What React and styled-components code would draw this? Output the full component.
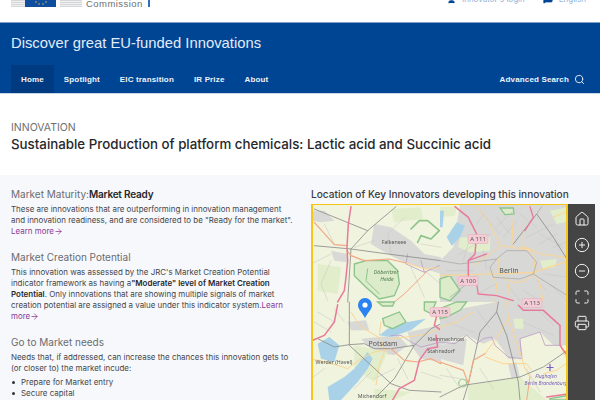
import React from 'react'
import styled, { createGlobalStyle } from 'styled-components'
import { Home, CirclePlus, CircleMinus, Maximize, Printer, Search, ArrowRight, User, MessageSquare } from 'lucide-react'

const Global = createGlobalStyle`
  html, body {
    margin: 0;
    height: 400px;
    overflow: hidden;
    background: #fff;
  }
  * { box-sizing: border-box; }
`

const Page = styled.div`
  width: 600px;
  height: 400px;
  overflow: hidden;
  font-family: Inter, "Noto Sans", sans-serif;
`

const TopBar = styled.div`
  height: 22px;
  overflow: hidden;
  display: flex;
  align-items: flex-start;
  justify-content: space-between;
  padding: 0 14px 0 11px;
`

const LogoWrap = styled.div`
  display: flex;
  align-items: flex-start;
`

const Stripes = styled.div`
  width: ${p => p.$w}px;
  height: 7px;
  background: repeating-linear-gradient(180deg, #d4d6d8 0, #d4d6d8 1px, #f0f0f0 1px, #f0f0f0 2px);
`

const Flag = styled.div`
  width: 31px;
  height: 7px;
  background: #0f4d9e;
  margin-right: 4px;
  display: flex;
  justify-content: center;
  svg { display: block; }
`

const Commission = styled.span`
  font-family: "Liberation Sans", sans-serif;
  font-size: 9.5px;
  line-height: 7px;
  height: 7px;
  letter-spacing: 0.45px;
  color: #6d6f72;
  margin-left: 4px;
  padding-right: 5px;
  border-right: 2px solid #2f70bd;
`

const TopLinks = styled.div`
  display: flex;
  align-items: center;
  gap: 18px;
  margin-top: -6px;
`

const TopLink = styled.span`
  display: flex;
  align-items: center;
  gap: 6px;
  font-size: 8px;
  line-height: 8px;
  color: #8fb0d8;
  svg { color: #004494; fill: #004494; }
`

const Banner = styled.header`
  height: 72px;
  background: #004494;
  border-top: 1px solid #7f9fc9;
  border-bottom: 1px solid #c9d6e8;
  display: flex;
  flex-direction: column;
  justify-content: space-between;
  padding: 0 11px;
`

const SiteTitle = styled.div`
  font-family: "Liberation Sans", sans-serif;
  font-size: 14.8px;
  line-height: 17px;
  color: #e3ecf6;
  margin-top: 12px;
`

const Nav = styled.nav`
  display: flex;
  align-items: stretch;
  justify-content: space-between;
  height: 28px;
`

const NavLinks = styled.div`
  display: flex;
`

const NavItem = styled.a`
  display: flex;
  align-items: center;
  padding: 0 10px;
  font-family: "Liberation Sans", sans-serif;
  font-size: 8px;
  font-weight: 700;
  letter-spacing: 0.15px;
  color: #eef3f9;
  background: ${p => (p.$active ? '#003a80' : 'transparent')};
`

const AdvSearch = styled.a`
  display: flex;
  align-items: center;
  gap: 5px;
  padding-right: 4px;
  font-family: "Liberation Sans", sans-serif;
  font-size: 8px;
  font-weight: 700;
  letter-spacing: 0.15px;
  color: #eef3f9;
`

const TitleBlock = styled.section`
  height: 81px;
  padding: 27px 11px 0;
`

const Kicker = styled.div`
  font-size: 10.5px;
  line-height: 13px;
  color: #6f6f6f;
`

const Title = styled.h1`
  margin: 2px 0 0;
  font-size: 13.3px;
  line-height: 17px;
  font-weight: 500;
  color: #26272b;
  white-space: nowrap;
`

const Main = styled.main`
  height: 225px;
  background: #f7f8fb;
  display: grid;
  grid-template-columns: 300px 300px;
  overflow: hidden;
`

const Left = styled.div`
  padding: 12px 0 0 11px;
  width: 296px;
`

const Block = styled.div`
  margin-bottom: 13px;
`

const Heading = styled.h2`
  margin: 0 0 3px;
  font-size: 10px;
  line-height: 14px;
  font-weight: 400;
  color: #6a6c70;
  b { font-weight: 600; color: #26272b; letter-spacing: -0.2px; }
`

const Body = styled.p`
  margin: 0;
  font-size: 7.95px;
  line-height: 11px;
  color: #44464a;
  b { font-weight: 600; color: #26272b; }
`

const More = styled.a`
  color: #8a3a96;
  svg { vertical-align: 0; margin: -2px 0; }
`

const Needs = styled.ul`
  margin: 3px 0 0;
  padding: 0 0 0 10px;
  list-style: none;
  li {
    position: relative;
    font-size: 7.95px;
    line-height: 11px;
    color: #44464a;
  }
  li::before {
    content: '';
    position: absolute;
    left: -9px;
    top: 4px;
    width: 3px;
    height: 3px;
    border-radius: 50%;
    background: #333;
  }
`

const Right = styled.div`
  padding-top: 12px;
  padding-left: 11px;
`

const MapTitle = styled.h2`
  margin: 0 0 3px;
  font-size: 10.1px;
  line-height: 14px;
  font-weight: 500;
  color: #3a3c40;
  white-space: nowrap;
`

const MapRow = styled.div`
  display: flex;
  height: 220px;
`

const MapFrame = styled.div`
  flex: none;
  width: 257px;
  height: 100%;
  border: 2px solid #f5c518;
  border-top-width: 1px;
  background: #eef1de;
  overflow: hidden;
  svg { display: block; filter: blur(0.35px); }
`

const Tools = styled.div`
  flex: none;
  width: 27px;
  background: #444;
  display: flex;
  flex-direction: column;
  align-items: center;
  gap: 10px;
  padding-top: 7px;
  color: #f2f2f2;
`

const Road = styled.path`
  fill: none;
  stroke: ${p => p.$c};
  stroke-width: ${p => p.$w};
  stroke-linejoin: round;
  stroke-linecap: round;
`

const Label = styled.text`
  font-family: "Noto Sans", sans-serif;
  font-size: ${p => p.$s || 5.3}px;
  fill: ${p => p.$c || '#555'};
  font-style: ${p => (p.$i ? 'italic' : 'normal')};
  text-anchor: middle;
`

const URBAN = '#d8d8d6'
const WATER = '#a9d2e8'
const WOOD = '#dcebca'
const PALE = '#e2eecb'
const PINK = '#e9799b'
const ORANGE = '#f4a683'
const YELLOW = '#fbd594'
const RAIL = '#8c8c8c'
const RING = '#a2a2a2'
const PURPLE = '#bc9fc8'
const EDGE = '#8cc48c'
const STREET = '#c4c4c2'

// the four quarters of the map, each drawn at 3x from its own corner
const quarters = [
  {
    at: [311, 204],
    areas: [
      [URBAN, 'M190 60 L240 70 L300 110 L340 150 L390 160 L390 210 L330 190 L280 175 L230 150 L180 120 Z'],
      [URBAN, 'M0 20 L40 20 L70 50 L30 55 L0 50 Z'],
      [URBAN, 'M60 140 L110 150 L110 175 L70 170 Z'],
      [PALE, 'M240 15 L330 10 L335 45 L250 55 Z'],
      [PALE, 'M20 180 L90 190 L80 270 L20 260 Z'],
    ],
    woods: ['M130 180 L165 170 L230 170 L260 200 L265 240 L250 275 L205 285 L165 250 L130 215 Z'],
    lines: [
      [EDGE, 3, 'M170 195 L165 230 L205 270'],
      [EDGE, 5, 'M300 75 L325 50 L350 50 L385 80 L360 105 L330 95 L320 115'],
      [STREET, 1.5, 'M40 60 L70 120 M0 180 L60 150 M60 170 L30 240 L50 290 M130 130 L190 110 M240 150 L230 90 L280 40 M340 200 L390 240 M330 120 L390 130 M300 190 L340 280'],
      [PURPLE, 2.5, 'M290 150 L285 180 L340 205 L330 170 M340 205 L385 185'],
      [RAIL, 2.5, 'M10 15 L170 80 L255 8'],
      [RAIL, 2.5, 'M170 80 L120 135 L110 294'],
      [RAIL, 2.5, 'M10 125 L120 135 L230 150 L390 170'],
      [YELLOW, 3, 'M285 177 L345 195 L390 190'],
      [ORANGE, 3, 'M350 200 L280 270 L250 294'],
      [ORANGE, 3.5, 'M10 55 L70 122 L108 125'],
      [ORANGE, 3.5, 'M108 140 L120 155 L160 170 L235 165 L285 177'],
      [PINK, 4.5, 'M120 8 L112 60 L108 130 L110 170 L105 220 L100 260 L80 294'],
    ],
  },
  {
    at: [440, 204],
    areas: [
      [URBAN, 'M60 0 L390 0 L390 294 L0 294 L0 170 L40 130 Z'],
      [PALE, 'M0 8 L50 8 L45 35 L0 40 Z'],
      [PALE, 'M60 100 L150 100 L150 140 L90 145 L55 130 Z'],
      [PALE, 'M330 20 L390 8 L390 50 L350 60 Z'],
      [PALE, 'M300 170 L350 165 L345 190 L310 195 Z'],
      [WATER, 'M50 55 L75 65 L60 100 L35 125 L20 100 Z'],
      [WATER, 'M0 20 L12 20 L8 70 L0 70 Z'],
    ],
    woods: ['M0 225 L30 215 L60 260 L30 290 L0 280 Z', 'M180 12 L220 12 L222 30 L195 32 Z'],
    lines: [
      [STREET, 1.5, 'M120 20 L180 90 M60 150 L150 90 M260 100 L340 60 M300 90 L370 130 M310 210 L390 220 M20 200 L100 200 M110 270 L170 240 M220 20 L170 70 M330 240 L380 290 M250 260 L300 290 M200 240 L240 290 M90 100 L70 170 M130 140 L140 195 M130 30 L110 60 M170 40 L210 90 M240 30 L290 70 M300 120 L350 90 M320 260 L290 230 M340 130 L390 110 M60 240 L120 210 M230 50 L190 100'],
      [YELLOW, 3, 'M150 60 L180 125 L150 150 L100 185'],
      [YELLOW, 3, 'M215 40 L220 130 M250 60 L250 125 L300 150 L380 160'],
      [YELLOW, 3, 'M180 125 L280 140 M110 10 L150 60 M340 40 L385 20'],
      [YELLOW, 3, 'M150 200 L170 240 L165 294 M205 240 L210 294'],
      [YELLOW, 3.5, 'M0 215 L150 210 L280 205 L390 170'],
      [YELLOW, 3, 'M280 205 L300 240 L310 294'],
      [YELLOW, 3, 'M240 130 C300 130 300 230 235 235 C190 235 160 200 180 155'],
      [RING, 2, 'M0 170 L60 180 L170 165 L200 140 L260 140 L290 175 L280 210 L240 225 L160 220 L150 190 L170 165'],
      [RAIL, 2.5, 'M220 120 L290 30 L340 100 L390 180'],
      [RING, 2, 'M280 210 L390 280 M30 280 L80 240 M290 30 L305 8'],
      [PINK, 4.5, 'M45 8 L85 40 L110 90 L105 150 L85 170 L85 215'],
      [PINK, 4, 'M85 170 L140 150 M270 8 L280 40 L255 80'],
      [PINK, 4, 'M110 240 L115 270 L170 275 L220 290'],
    ],
  },
  {
    at: [311, 302],
    areas: [
      [URBAN, 'M150 110 L260 100 L290 130 L250 160 L190 150 Z'],
      [URBAN, 'M110 60 L165 55 L175 85 L120 85 Z'],
      [URBAN, 'M290 90 L390 70 L390 180 L330 170 L300 130 Z'],
      [PALE, 'M130 130 L230 150 L190 240 L130 200 Z'],
      [PALE, 'M190 260 L300 270 L250 294 L190 294 Z'],
      [WATER, 'M20 125 L55 105 L85 130 L70 180 L30 170 Z'],
      [WATER, 'M50 255 L100 225 L130 200 L170 150 L185 170 L170 200 L140 240 L90 294 L55 294 Z'],
      [WATER, 'M205 100 L230 80 L290 60 L345 50 L300 85 L240 105 Z'],
    ],
    woods: ['M215 50 L265 30 L285 60 L245 80 L220 70 Z', 'M200 0 L250 0 L245 12 L215 12 Z', 'M340 0 L375 0 L360 35 L340 25 Z'],
    lines: [
      [STREET, 1.5, 'M10 60 L60 90 M40 200 L0 230 M100 60 L70 20 M130 260 L180 210 M260 170 L290 230 M330 210 L390 230 M250 200 L190 230 M20 30 L70 60'],
      [PURPLE, 2.5, 'M240 100 L270 100 L300 120 L330 135 L390 120'],
      [YELLOW, 3, 'M120 30 L150 75 L210 110 L220 150 L205 190 L195 250'],
      [YELLOW, 3, 'M210 60 L205 100 M0 170 L80 190 L110 200 L150 170 L190 150 L240 140'],
      [YELLOW, 3, 'M240 110 L330 100 L390 80'],
      [RAIL, 2.5, 'M115 0 L115 130 L240 245 L295 265 L390 270'],
      [RAIL, 2.5, 'M20 110 L70 135 L115 128 L160 125 L190 140 L240 140 L310 130 L360 80 L390 65'],
      [RAIL, 2.5, 'M310 130 L250 230 L200 280'],
      [ORANGE, 3.5, 'M240 140 L280 175 L320 180 L360 170 L390 185'],
      [PINK, 4.5, 'M80 8 L70 60 L40 100 L5 115'],
      [PINK, 4.5, 'M390 85 L370 70 L380 30 M375 100 L380 135 L350 140 L325 175 L310 235 L265 260 L245 294'],
    ],
  },
  {
    at: [440, 302],
    areas: [
      [URBAN, 'M0 50 L60 20 L170 0 L390 0 L390 130 L340 130 L300 90 L240 110 L250 170 L205 165 L165 110 L130 125 L80 100 L0 130 Z'],
      [URBAN, 'M165 30 L200 60 L250 270 L225 270 Z'],
      [URBAN, 'M0 130 L80 110 L70 190 L0 170 Z'],
      ['#f4f3da', 'M120 130 L165 115 L205 170 L250 175 L190 190 L135 165 Z'],
      [PALE, 'M85 250 L240 225 L320 294 L85 294 Z'],
      [PALE, 'M220 50 L250 50 L250 80 L225 80 Z'],
      ['#f1f3dc', 'M245 110 L300 95 L340 135 L360 130 L300 190 L250 180 Z'],
    ],
    woods: ['M0 20 L50 0 L80 0 L60 25 L20 45 L0 50 Z', 'M330 290 L385 280 L385 294 L330 294 Z'],
    lines: [
      [STREET, 1.5, 'M20 60 L100 90 M110 20 L150 80 M250 60 L340 100 M300 30 L340 70 M120 200 L160 260 M0 220 L60 230 M260 200 L300 270 M20 200 L60 260'],
      [PURPLE, 2.5, 'M0 120 L45 125 L80 100 L110 125 L130 110 L155 105 L165 130 L205 165 L245 170 L240 110 L300 90 L315 130 L365 130'],
      [YELLOW, 3, 'M0 75 L50 60 L100 30'],
      [YELLOW, 3, 'M135 165 L190 185 L260 185 L275 205 M360 130 L385 180 L350 205 L310 215'],
      [YELLOW, 3, 'M205 50 L240 150 L255 200 L270 225 M205 50 L165 115 L135 155'],
      [YELLOW, 3, 'M200 0 L205 50'],
      [RAIL, 2.5, 'M175 0 L170 30 L120 90 L85 245 L70 294'],
      [RAIL, 2.5, 'M170 30 L200 100 L235 240 L240 294'],
      [RAIL, 2.5, 'M0 285 L70 250 L240 225 L310 195 L390 140'],
      [ORANGE, 3.5, 'M0 180 L70 205 L85 245 L100 175 L135 155'],
      [ORANGE, 3, 'M270 225 L260 294'],
      [PINK, 4.5, 'M235 10 L250 25 L310 25 L360 70 L360 130 L385 165'],
      [PINK, 4, 'M320 285 L390 275'],
      [EDGE, 3, 'M56 243 A12 12 0 1 0 80 243 A12 12 0 1 0 56 243'],
    ],
  },
]

const shields = [
  { x: 478, y: 239, text: 'A 111' },
  { x: 468, y: 281, text: 'A 100' },
  { x: 440, y: 312, text: 'A 115' },
  { x: 532, y: 303, text: 'A 113' },
]

function BerlinMap() {
  return (
    <svg width="253" height="219" viewBox="313 205 253 219">
      <rect x="313" y="205" width="253" height="219" fill="#f0f3dd" />
      {quarters.map(q => (
        <g key={q.at[0] + '-' + q.at[1]} transform={`translate(${q.at[0]} ${q.at[1]}) scale(0.3333)`}>
          {q.areas.map(([c, d]) => <path key={d} d={d} fill={c} />)}
          {q.woods.map(d => <path key={d} d={d} fill={WOOD} stroke={EDGE} strokeWidth="4" />)}
          {q.lines.map(([c, w, d]) => <Road key={d} d={d} $c={c} $w={w} />)}
        </g>
      ))}

      <Label x="394" y="244">Falkensee</Label>
      <Label x="386" y="274" $i $c="#4f7a4c">Döberitzer</Label>
      <Label x="387" y="281" $i $c="#4f7a4c">Heide</Label>
      <Label x="509" y="273" $s={7}>Berlin</Label>
      <Label x="383" y="346" $s={7}>Potsdam</Label>
      <Label x="334" y="364">Werder (Havel)</Label>
      <Label x="372" y="398">Michendorf</Label>
      <Label x="446" y="341">Kleinmachnow</Label>
      <Label x="441" y="353">Stahnsdorf</Label>
      <Label x="546" y="378" $s={4.9} $i $c="#7a5fc0">Flughafen</Label>
      <Label x="546" y="385" $s={4.9} $i $c="#7a5fc0">Berlin Brandenburg</Label>
      <path d="M550 364 v7 M546.5 367.5 h7" stroke="#7a5fc0" strokeWidth="1.2" />

      {shields.map(s => (
        <g key={s.text}>
          <rect x={s.x - 10} y={s.y - 4.5} width="20" height="9" rx="1.5" fill="#f3ccd6" stroke="#e5a9b8" strokeWidth=".5" />
          <Label x={s.x} y={s.y + 2.2} $s={6}>{s.text}</Label>
        </g>
      ))}

      <path d="M365 318 C361 311 358 309 358 305 A7 7 0 0 1 372 305 C372 309 369 311 365 318 Z" fill="#2b82f0" />
      <circle cx="365" cy="305" r="2.6" fill="#fff" />
    </svg>
  )
}

export default function App() {
  return (
    <Page>
      <Global />
      <TopBar>
        <LogoWrap>
          <Stripes $w={14} />
          <Flag>
            <svg width="14" height="7" viewBox="0 0 14 7">
              <circle cx="2" cy="2" r=".7" fill="#f4d03f" />
              <circle cx="5" cy="4" r=".7" fill="#f4d03f" />
              <circle cx="9" cy="4" r=".7" fill="#f4d03f" />
              <circle cx="12" cy="2" r=".7" fill="#f4d03f" />
            </svg>
          </Flag>
          <Stripes $w={22} />
          <Commission>Commission</Commission>
        </LogoWrap>
        <TopLinks>
          <TopLink><User size={9} />Innovator's login</TopLink>
          <TopLink><MessageSquare size={10} />English</TopLink>
        </TopLinks>
      </TopBar>

      <Banner>
        <SiteTitle>Discover great EU-funded Innovations</SiteTitle>
        <Nav>
          <NavLinks>
            <NavItem $active>Home</NavItem>
            <NavItem>Spotlight</NavItem>
            <NavItem>EIC transition</NavItem>
            <NavItem>IR Prize</NavItem>
            <NavItem>About</NavItem>
          </NavLinks>
          <AdvSearch>Advanced Search <Search size={11} /></AdvSearch>
        </Nav>
      </Banner>

      <TitleBlock>
        <Kicker>INNOVATION</Kicker>
        <Title>Sustainable Production of platform chemicals: Lactic acid and Succinic acid</Title>
      </TitleBlock>

      <Main>
        <Left>
          <Block>
            <Heading>Market Maturity:<b>Market Ready</b></Heading>
            <Body>
              These are innovations that are outperforming in innovation management and innovation readiness, and are considered to be "Ready for the market". <More>Learn more<ArrowRight size={9} /></More>
            </Body>
          </Block>
          <Block>
            <Heading>Market Creation Potential</Heading>
            <Body>
              This innovation was assessed by the JRC's Market Creation Potential indicator framework as having a<b>"Moderate" level of Market Creation Potential</b>. Only innovations that are showing multiple signals of market creation potential are assigned a value under this indicator system.<More>Learn more<ArrowRight size={9} /></More>
            </Body>
          </Block>
          <Block>
            <Heading>Go to Market needs</Heading>
            <Body>Needs that, if addressed, can increase the chances this innovation gets to (or closer to) the market incude:</Body>
            <Needs>
              <li>Prepare for Market entry</li>
              <li>Secure capital</li>
              <li>Scale up market opportunities</li>
            </Needs>
          </Block>
        </Left>
        <Right>
          <MapTitle>Location of Key Innovators developing this innovation</MapTitle>
          <MapRow>
            <MapFrame><BerlinMap /></MapFrame>
            <Tools>
              <Home size={16} strokeWidth={1.5} />
              <CirclePlus size={16} strokeWidth={1.5} />
              <CircleMinus size={16} strokeWidth={1.5} />
              <Maximize size={16} strokeWidth={1.5} />
              <Printer size={16} strokeWidth={1.5} />
            </Tools>
          </MapRow>
        </Right>
      </Main>
    </Page>
  )
}
